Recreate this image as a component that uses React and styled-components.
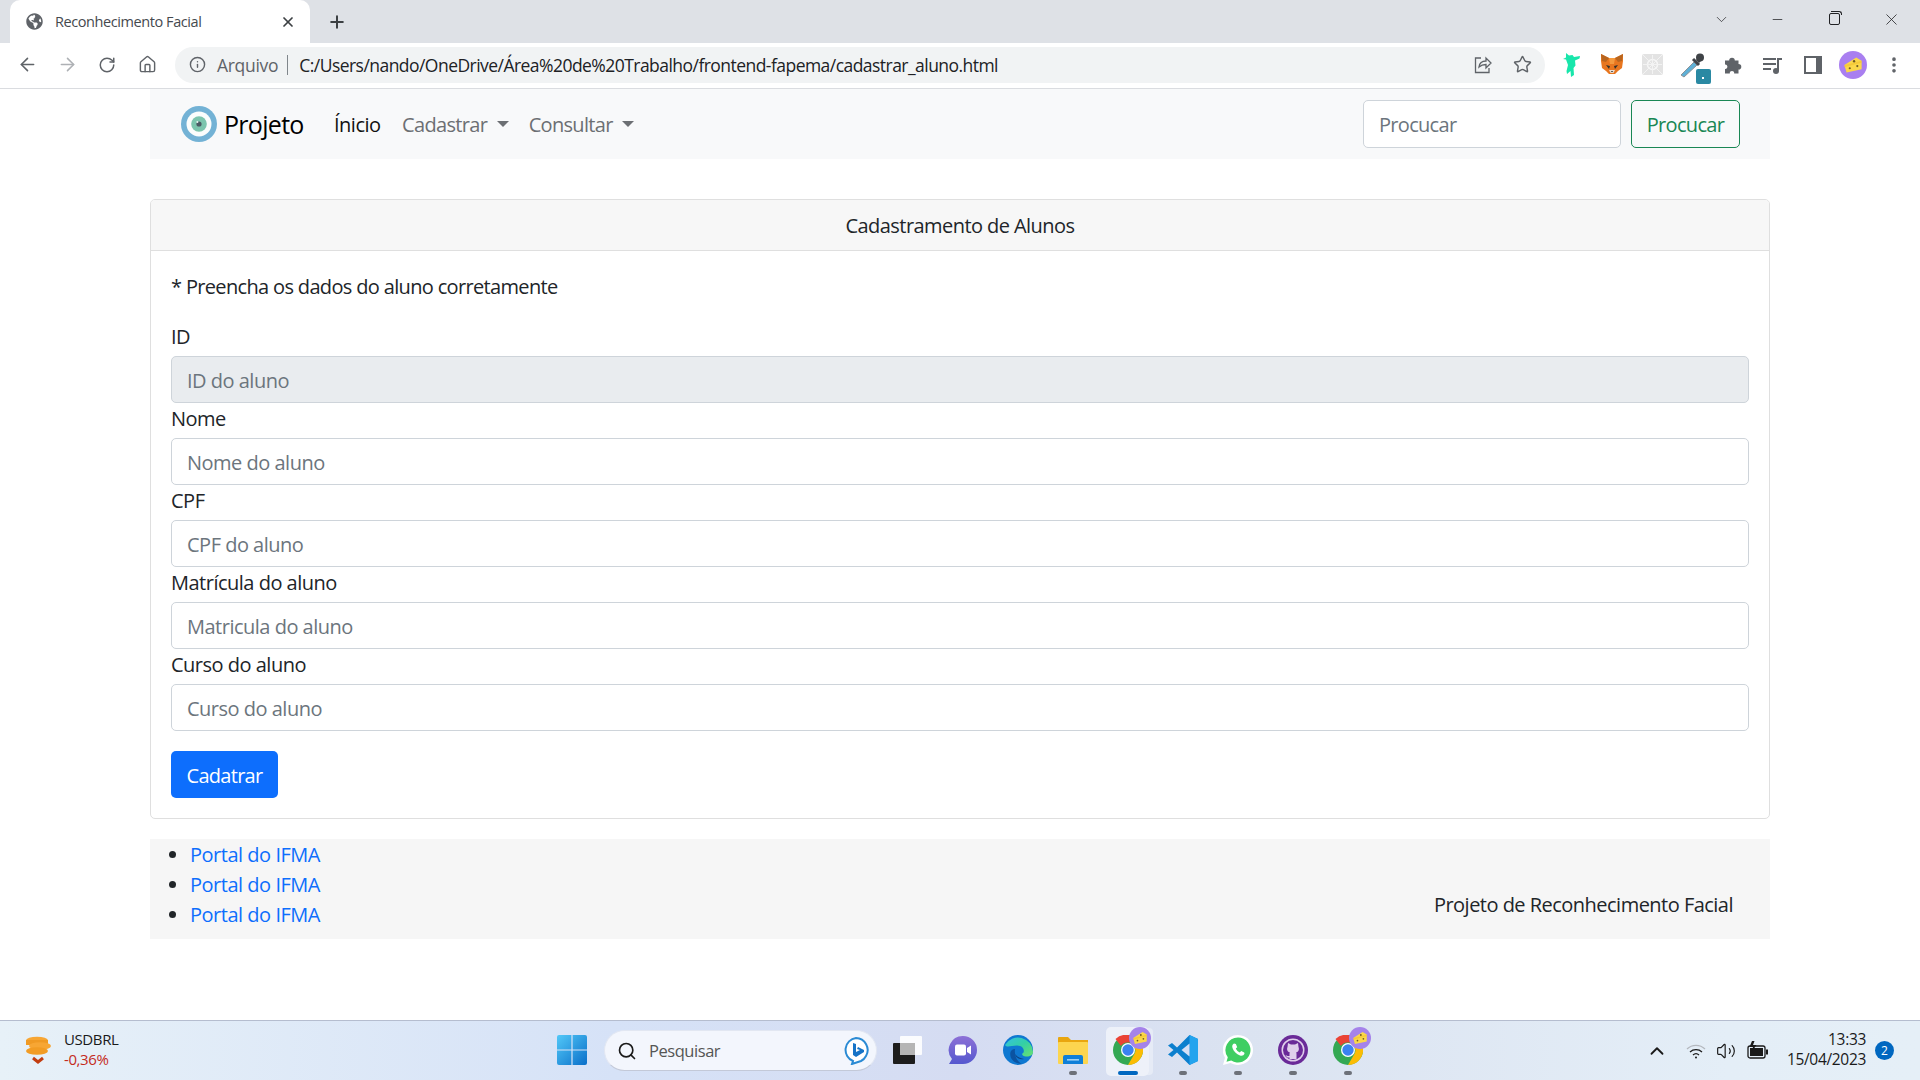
import React from "react";
import styled, { createGlobalStyle } from "styled-components";
import { ArrowLeft, ArrowRight, RotateCw, Home, Info, Star, ChevronDown, ChevronUp, Minus, X, Plus, Search, Volume2, MoreVertical } from "lucide-react";
import { FaGlobeAmericas } from "react-icons/fa";

const UI = `"Open Sans", "Noto Sans", "Liberation Sans", sans-serif`;

const Global = createGlobalStyle`
  html, body { margin: 0; padding: 0; height: 100%; background: #fff; overflow: hidden; }
  * { box-sizing: border-box; }
  body { font-family: ${UI}; color: #212529; }
  input::placeholder { color: #6c757d; opacity: 1; }
`;

const Screen = styled.div`
  width: 1920px; height: 1080px; display: flex; flex-direction: column; overflow: hidden;
`;

/* browser chrome */
const TabStrip = styled.div`
  height: 43px; flex: none; background: #dee1e6; display: flex; align-items: stretch; padding-left: 10px;
`;
const Tab = styled.div`
  width: 300px; background: #fff; border-radius: 10px 10px 0 0; display: flex; align-items: center;
  padding: 0 14px 0 16px; color: #45494e; font-size: 14.5px; letter-spacing: -0.42px;
  svg { flex: none; }
`;
const TabTitle = styled.span` flex: 1; margin-left: 12px; white-space: nowrap; `;
const NewTab = styled.div` width: 54px; display: flex; align-items: center; justify-content: center; color: #3c4043; `;
const WindowControls = styled.div`
  margin-left: auto; display: flex; align-items: center; padding-bottom: 5px; color: #202124;
`;
const WinBtn = styled.div` width: ${p => p.$w || 57}px; display: flex; justify-content: center; `;
const Restore = styled.div`
  width: 11px; height: 12px; border: 1.2px solid #202124; border-radius: 2px; position: relative;
  &::before { content: ""; position: absolute; top: -3px; left: 1px; width: 10px; height: 3px; border: 1.2px solid #202124; border-bottom: 0; border-left: 0; border-radius: 0 3px 0 0; }
`;
const Toolbar = styled.div`
  height: 46px; flex: none; background: #fff; border-bottom: 1px solid #dadce0; display: flex; align-items: center; padding: 0 0 2px 7px;
`;
const NavIcon = styled.div`
  width: 40px; height: 36px; display: flex; align-items: center; justify-content: center; color: ${p => p.$off ? "#aeb1b5" : "#5f6368"}; flex: none;
`;
const Omnibox = styled.div`
  margin-left: 8px; width: 1370px; height: 36px; background: #f1f3f4; border-radius: 18px; display: flex; align-items: center; padding: 0 13px 0 14px; flex: none;
`;
const Chip = styled.span` color: #5f6368; font-size: 17.5px; letter-spacing: -0.3px; margin-left: 11px; `;
const Sep = styled.span` width: 1px; height: 20px; background: #80868b; margin: 0 11px 0 9px; `;
const Url = styled.span` color: #202124; font-size: 17.5px; letter-spacing: -0.54px; white-space: nowrap; flex: 1; `;
const OmniIcons = styled.div` display: flex; align-items: center; gap: 21px; color: #5f6368; `;
const Exts = styled.div` display: flex; align-items: center; margin-left: 7px; `;
const Ext = styled.div` width: 40.2px; height: 36px; display: flex; align-items: center; justify-content: center; color: #5f6368; flex: none; `;

/* page */
const Page = styled.div` flex: 1; min-height: 0; overflow: hidden; padding: 0 150px; display: flex; flex-direction: column; `;
const Nav = styled.nav`
  height: 70px; flex: none; background: #f8f9fa; display: flex; align-items: center; padding: 0 30px 0 31px;
`;
const Brand = styled.div` display: flex; align-items: center; font-size: 25px; letter-spacing: -0.7px; color: #000; width: 153px; gap: 7px; `;
const NavLink = styled.span`
  font-size: 20px; letter-spacing: ${p => p.$active ? -0.5 : -0.68}px; color: ${p => p.$active ? "#111" : "#6c6f73"}; display: flex; align-items: center; margin-right: ${p => p.$active ? 21.5 : 20}px;
  &::after { content: ""; display: ${p => p.$caret ? "block" : "none"}; margin-left: 9.5px; border-top: 6.5px solid currentColor; border-left: 6.5px solid transparent; border-right: 6.5px solid transparent; margin-top: -1px; }
`;
const NavSearch = styled.form` margin-left: auto; display: flex; gap: 10px; `;
const SearchInput = styled.input`
  width: 258px; height: 48px; font: 20px ${UI}; letter-spacing: -0.7px; padding: 0 15px; border: 1px solid #ced4da; border-radius: 5px; background: #fff;
`;
const OutlineBtn = styled.button`
  width: 109px; height: 48px; font: 20px ${UI}; letter-spacing: -0.68px; color: #198754; background: transparent; border: 1px solid #198754; border-radius: 5px; padding: 0;
`;
const Card = styled.section`
  margin-top: 40px; height: 620px; flex: none; border: 1px solid #dfdfdf; border-radius: 5px; display: flex; flex-direction: column; overflow: hidden;
`;
const CardHeader = styled.header`
  height: 51px; flex: none; background: #f7f7f7; border-bottom: 1px solid #dfdfdf; display: flex; align-items: center; justify-content: center; font-size: 20px; letter-spacing: -0.56px; color: #212529;
`;
const CardBody = styled.div` padding: 20px; font-size: 20px; letter-spacing: -0.5px; `;
const Lead = styled.p` margin: 0 0 18px; line-height: 32px; letter-spacing: -0.66px; `;
const Label = styled.label` display: block; line-height: 32px; margin-bottom: 2.5px; `;
const Field = styled.input`
  display: block; width: 100%; height: 47.5px; font: 20px ${UI}; letter-spacing: -0.5px; padding: 2px 15px 0; border: 1px solid #ced4da; border-radius: 5px;
  background: ${p => p.disabled ? "#e9ecef" : "#fff"};
`;
const Primary = styled.button`
  display: block; margin-top: 20px; width: 107px; height: 47px; background: #0d6efd; color: #fff; border: 0; border-radius: 5px; font: 20px ${UI}; letter-spacing: -0.72px; padding: 2px 0 0;
`;
const Footer = styled.footer`
  margin-top: 20px; height: 100px; flex: none; background: #f6f6f6; display: flex; justify-content: space-between; padding-right: 37px;
`;
const Links = styled.ul` margin: 0; padding: 1px 0 0 40px; font-size: 20px; line-height: 30px; letter-spacing: -0.48px; `;
const LinkA = styled.a` color: #0d6efd; text-decoration: none; `;
const FootText = styled.div` font-size: 20px; letter-spacing: -0.52px; color: #212529; align-self: flex-end; line-height: 30px; padding-bottom: 19px; `;

/* taskbar */
const Taskbar = styled.div`
  height: 60px; flex: none; border-top: 1px solid #b5bdcf;
  background: linear-gradient(90deg, #e7f1f8 0%, #d6e2f7 32%, #d5dcf2 50%, #dbe3f1 65%, #e4eef7 90%, #e5eff7 100%);
  display: grid; grid-template-columns: 544px auto 1fr; align-items: center;
`;
const Widget = styled.div` display: flex; align-items: center; padding-left: 25px; gap: 11px; `;
const WidgetText = styled.div` font-size: 15px; line-height: 20px; letter-spacing: -0.4px; color: #1a1a1a; margin-top: -4px; `;
const Red = styled.div` color: #c42b1c; `;
const Center = styled.div` display: flex; align-items: center; `;
const Tile = styled.div`
  width: 55px; height: 52px; display: flex; align-items: center; justify-content: center; position: relative; flex: none;
  svg { position: relative; top: -1px; }
  &::before {
    content: ""; display: ${p => p.$active ? "block" : "none"}; position: absolute; top: 2px; bottom: 1px; left: 6px; right: 6px; border-radius: 5px;
    background: rgba(255,255,255,.55); box-shadow: 5px 0 0 -1px rgba(255,255,255,.35);
  }
  &::after { content: ""; display: ${p => p.$dot ? "block" : "none"}; position: absolute; bottom: 2px; left: 50%; transform: translateX(-50%); height: 4px; border-radius: 2px; width: ${p => p.$active ? 20 : 8}px; background: ${p => p.$active ? "#0067c0" : "#6d7179"}; }
`;
const SearchPill = styled.div`
  width: 273px; height: 41px; margin: 0 3px 0 5px; border-radius: 21px; background: #f3f6fd; border: 1px solid #e2e7f2; border-bottom-color: #c3c9d8; display: flex; align-items: center; padding: 0 7px 0 12px; gap: 12px; font-size: 16.5px; letter-spacing: -0.45px; color: #555;
`;
const PillText = styled.span` flex: 1; `;
const Tray = styled.div` display: flex; align-items: center; justify-content: flex-end; padding-right: 26px; color: #1a1a1a; `;
const TrayIcon = styled.div` width: ${p => p.$w}px; margin-right: ${p => p.$mr || 0}px; display: flex; justify-content: center; flex: none; `;
const Clock = styled.div` text-align: right; font-size: 15.5px; line-height: 20px; letter-spacing: -0.32px; margin-left: 14px; margin-top: -4px; `;
const Badge = styled.div` width: 19px; height: 19px; border-radius: 50%; background: #0067c0; color: #fff; font-size: 12px; display: flex; align-items: center; justify-content: center; margin-left: 9px; `;

/* drawings */
const Eye = () => (
  <svg width="36" height="36" viewBox="0 0 36 36"><circle cx="18" cy="18" r="18" fill="#73b2d5"/><circle cx="18" cy="18" r="12.5" fill="#fbfdfc"/><circle cx="18" cy="18" r="7.8" fill="#7cc5ad"/><circle cx="18" cy="18" r="2.6" fill="#4b5a63"/><circle cx="16.4" cy="16" r="1" fill="#e8f5f0"/></svg>
);
const Ninja = () => (
  <svg width="20" height="24" viewBox="0 0 20 24"><path d="M4 0l3 2.500 3.500-.5 1.500 2 6-1-.5 2.500-4.500 2 .5 5-2 2.500.5 7-3 2-.5-6-3.500 3-.5-3 1.500-6-2-5.500L1 6l3-1.500z" fill="#18e6ab"/></svg>
);
const Fox = () => (
  <svg width="22" height="21" viewBox="0 0 22 21">
    <path d="M0 0l8 4h6l8-4 0 7-1 7-4 3-3 3H8l-3-3-4-3-1-7z" fill="#e8761f"/>
    <path d="M0 0l8 4-3 4-4-1zM22 0l-8 4 3 4 4-1z" fill="#b8651f"/>
    <path d="M5 11l4 1-1 3zM17 11l-4 1 1 3z" fill="#33302c"/>
    <path d="M8 16h6l-1.500 3h-3z" fill="#e9dccf"/>
    <path d="M9.800 17h2.400l-1.200 1.300z" fill="#2f2c28"/>
    <path d="M8 4h6l-1 6H9z" fill="#f59a3e"/>
  </svg>
);
const Grayext = () => (
  <svg width="21" height="21" viewBox="0 0 21 21"><rect width="21" height="21" rx="2" fill="#e3e3e3"/><circle cx="10.500" cy="10.500" r="5" fill="none" stroke="#f6f6f6" strokeWidth="1.500"/><path d="M1 1l19 19M20 1L1 20M10.500 1v19M1 10.500h19" stroke="#f3f3f3"/></svg>
);
const Blue = styled.span`
  position: absolute; right: -5px; bottom: -6px; width: 15px; height: 15px; background: #2a89a3; border-radius: 2px;
  &::after { content: ""; position: absolute; left: 6px; top: 8px; width: 2px; height: 2px; background: #fff; }
`;
const DropperBox = styled.div` position: relative; width: 26px; height: 26px; `;
const Dropper = () => (
  <DropperBox>
    <svg width="26" height="26" viewBox="0 0 26 26"><path d="M1 23l13-13 3 3L4 25z" fill="#5fb0d6" stroke="#8b9298"/><path d="M13 7l6 6" stroke="#3f4347" strokeWidth="3"/><circle cx="20" cy="5.500" r="4" fill="#3f4347"/><path d="M16 8l3 3 4-4-3-3z" fill="#3f4347"/></svg>
    <Blue />
  </DropperBox>
);
const Puzzle = () => (
  <svg width="20" height="20" viewBox="0 0 20 20" fill="#5f6368"><path d="M2 5.500h4.200a2.800 2.800 0 115.600 0H15.500v3.500a2.800 2.800 0 110 5.600V18.500h-4.300c.3-3.200-4.700-3.200-4.400 0H2V14c3.200.3 3.200-4.700 0-4.400z"/></svg>
);
const Queue = () => (
  <svg width="20" height="18" viewBox="0 0 20 18" fill="#5f6368"><rect x="0" y="2" width="13" height="2"/><rect x="0" y="7" width="13" height="2"/><rect x="0" y="12" width="8" height="2"/><circle cx="13" cy="15" r="3"/><rect x="14" y="2" width="2" height="13"/><rect x="14" y="2" width="5" height="2"/></svg>
);
const SidePanel = () => (
  <svg width="18" height="18" viewBox="0 0 18 18"><rect width="18" height="18" fill="#5f6368"/><rect x="2" y="2" width="10" height="14" fill="#fff"/></svg>
);
const Cheese = ({ size = 28, bg = "#a97ff0" }) => (
  <svg width={size} height={size} viewBox="0 0 26 26"><circle cx="13" cy="13" r="13" fill={bg}/><path d="M5 13l11-7 5 3v8L7 20z" fill="#fbd84a"/><path d="M5 13l16-4v2L5 15z" fill="#f2c12e" opacity=".6"/><circle cx="14" cy="9.500" r="1.100" fill="#6f5a20"/><circle cx="17" cy="14" r="1" fill="#6f5a20"/><circle cx="10" cy="16" r="1" fill="#6f5a20"/></svg>
);
const Share = () => (
  <svg width="18" height="18" viewBox="0 0 18 18" fill="none" stroke="#5f6368" strokeWidth="1.300"><path d="M7 2H1.500v14.500H15V12"/><path d="M5 11c.5-4 3.500-6 7-6V2l5 5-5 5V8.500c-3 0-5 .7-7 2.500z"/></svg>
);
const Coins = () => (
  <svg width="28" height="30" viewBox="0 0 28 30"><ellipse cx="12" cy="4.500" rx="11" ry="3.800" fill="#f7a634"/><rect x="1" y="4" width="22" height="5" fill="#f09a24"/><ellipse cx="15" cy="10" rx="11" ry="3.800" fill="#f7a634"/><ellipse cx="12" cy="15" rx="11" ry="3.800" fill="#f29c24"/><path d="M8 22l5 4 5-4" stroke="#c23d10" strokeWidth="3" fill="none"/></svg>
);
const WinLogo = () => (
  <svg width="30" height="30" viewBox="0 0 30 30"><defs><linearGradient id="w" x1="0" y1="0" x2="1" y2="1"><stop offset="0" stopColor="#52c8f8"/><stop offset="1" stopColor="#0a6fc9"/></linearGradient></defs><path fill="url(#w)" d="M0 2a2 2 0 012-2h12.400v14.400H0zM15.600 0H28a2 2 0 012 2v12.400H15.600zM0 15.600h14.400V30H2a2 2 0 01-2-2zM15.600 15.600H30V28a2 2 0 01-2 2H15.600z"/></svg>
);
const Bing = () => (
  <svg width="26" height="28" viewBox="0 0 26 28"><path d="M13 1a12 12 0 0110 18c-1 2-3 4-5 5l-9 3 1-3A12 12 0 0113 1z" fill="#fff" stroke="#2a8ad4" strokeWidth="2"/><path d="M10 6l3 1v8l4-2-3-1 1-2 6 3v2l-8 5-3-2z" fill="#1673c7"/></svg>
);
const TaskView = () => (
  <svg width="30" height="30" viewBox="0 0 30 30"><rect x="0" y="8" width="22" height="21" rx="1" fill="#1d1d1d"/><rect x="7" y="1" width="22" height="19" rx="1" fill="#fff" opacity=".9"/><rect x="7" y="8" width="15" height="12" fill="#b5b5b5"/></svg>
);
const Chat = () => (
  <svg width="30" height="30" viewBox="0 0 30 30"><defs><linearGradient id="c" x1="0" y1="0" x2="0" y2="1"><stop offset="0" stopColor="#8d70d6"/><stop offset="1" stopColor="#5558cf"/></linearGradient></defs><path d="M15 1a14 14 0 110 28H1l3-5A14 14 0 0115 1z" fill="url(#c)"/><rect x="7" y="9.500" width="11" height="11" rx="2" fill="#fff"/><path d="M19 13l4-2.500v9L19 17z" fill="#fff"/></svg>
);
const Edge = () => (
  <svg width="30" height="30" viewBox="0 0 30 30"><defs><linearGradient id="e" x1="0" y1="0" x2="1" y2="1"><stop offset="0" stopColor="#35c1e1"/><stop offset=".5" stopColor="#34d0a4"/><stop offset="1" stopColor="#6be06f"/></linearGradient></defs><circle cx="15" cy="15" r="15" fill="#0f78d1"/><path d="M2 10A15 15 0 0130 17c0 3-3 4.500-6 4.500-4 0-5-1.500-5-3 3 0 3-8-5-8C8 10.500 4 13 2 10z" fill="url(#e)"/><path d="M12 14c-4 0-6 4-4 9 2 4 7 6 11 6-4-2-8-7-7-15z" fill="#0b53a1"/><path d="M12 19c1 4 5 6 9 5-3-.5-7-2-9-5z" fill="#10407e"/></svg>
);
const Folder = () => (
  <svg width="30" height="30" viewBox="0 0 30 30"><path d="M0 3a1 1 0 011-1h9l3 3h17v6H0z" fill="#e9a60f"/><rect y="7" width="30" height="22" rx="1" fill="#fcd54f"/><path d="M5 29v-7a2 2 0 012-2h16a2 2 0 012 2v7z" fill="#0f7fd8"/><rect x="9" y="24" width="12" height="1.600" fill="#9bd0f4"/></svg>
);
const Chrome = () => (
  <svg width="30" height="30" viewBox="0 0 30 30"><circle cx="15" cy="15" r="15" fill="#34a853"/><path d="M15 0a15 15 0 0113 7.500H15A7.500 7.500 0 008 11L2.500 4A15 15 0 0115 0z" fill="#ea4335"/><path d="M28 7.500A15 15 0 0115 30l6.500-11.200A7.500 7.500 0 0020 10z" fill="#fbbc04"/><circle cx="15" cy="15" r="7" fill="#fff"/><circle cx="15" cy="15" r="5.700" fill="#3b82f0"/></svg>
);
const ChromeBadge = styled.span` position: absolute; top: 3px; right: 4px; display: block; height: 22px; `;
const VSCode = () => (
  <svg width="30" height="30" viewBox="0 0 30 30"><path d="M21.500 0L30 4v22l-8.500 4L9 17.500l-5 4.500-4-2.500L5.500 15 0 10.500 4 8l5 4.500z" fill="#0c7fce"/><path d="M21.500 0L30 4v22l-8.500 4z" fill="#24a4ee"/><path d="M21.500 8.500L13.500 15l8 6.500z" fill="#d5dff5"/></svg>
);
const WhatsApp = () => (
  <svg width="30" height="30" viewBox="0 0 30 30"><path d="M15 0a15 15 0 11-7.500 28L0 30l2-7.300A15 15 0 0115 0z" fill="#fff"/><path d="M15 2.500a12.500 12.500 0 11-6.800 23L3.500 26.700l1.300-4.500A12.500 12.500 0 0115 2.500z" fill="#3fce62"/><path d="M11 8.500c-1.500.8-2.200 2.500-1.500 4.500 1.200 3.500 4 6.300 7.500 7.500 2 .6 3.800 0 4.500-1.700l-.3-1.300-3-1.500-1.400 1.600c-1.700-.7-3.200-2.200-4-4l1.400-1.400-1.300-3.200z" fill="#fff"/></svg>
);
const GithubDesk = () => (
  <svg width="30" height="30" viewBox="0 0 30 30"><circle cx="15" cy="15" r="15" fill="#6a2a98"/><circle cx="15" cy="15" r="11.500" fill="#dfcfeb"/><circle cx="15" cy="15" r="10" fill="#6a2a98"/><path d="M10 8l3 1.500h4L20 8l.5 4c1 2.500 0 5-2.500 5.500.5.500.5 1 .5 2V24h-7v-1.500c-2 .3-3-.5-4-2.500 1 .5 2 1.200 4 1v-1.500c0-1 0-1.500.5-2-2.500-.5-3.500-3-2.500-5.500z" fill="#dfcfeb"/></svg>
);
const Wifi = () => (
  <svg width="20" height="16" viewBox="0 0 20 16" fill="none" stroke="#1a1a1a" strokeWidth="1.300"><path d="M1 6a13 13 0 0118 0" stroke="#b4b8bf"/><path d="M4 9a9 9 0 0112 0"/><path d="M7 12a4.500 4.500 0 016 0"/><circle cx="10" cy="14.500" r="1" fill="#1a1a1a" stroke="none"/></svg>
);
const Battery = () => (
  <svg width="22" height="20" viewBox="0 0 22 20"><rect x="1" y="5" width="17" height="12" rx="2" fill="none" stroke="#1a1a1a" strokeWidth="1.300"/><rect x="3" y="7" width="13" height="8" fill="#1a1a1a"/><rect x="19" y="8.500" width="2" height="5" fill="#1a1a1a"/><path d="M5 0L2.500 6H6l-1.500 5 5-7H6l1.500-4z" fill="#1a1a1a"/></svg>
);

const fields = [
  ["ID", "ID do aluno", true],
  ["Nome", "Nome do aluno"],
  ["CPF", "CPF do aluno"],
  ["Matrícula do aluno", "Matricula do aluno"],
  ["Curso do aluno", "Curso do aluno"],
];

export default function App() {
  return (
    <Screen>
      <Global />
      <TabStrip>
        <Tab>
          <FaGlobeAmericas size={17} color="#5f6368" />
          <TabTitle>Reconhecimento Facial</TabTitle>
          <X size={16} strokeWidth={2.6} color="#3c4043" />
        </Tab>
        <NewTab><Plus size={20} strokeWidth={2.4} /></NewTab>
        <WindowControls>
          <WinBtn $w={56}><ChevronDown size={17} strokeWidth={1} /></WinBtn>
          <WinBtn><Minus size={15} strokeWidth={1.2} /></WinBtn>
          <WinBtn><Restore /></WinBtn>
          <WinBtn><X size={19} strokeWidth={1} /></WinBtn>
        </WindowControls>
      </TabStrip>
      <Toolbar>
        <NavIcon><ArrowLeft size={21} strokeWidth={1.8} /></NavIcon>
        <NavIcon $off><ArrowRight size={21} strokeWidth={1.8} /></NavIcon>
        <NavIcon><RotateCw size={18} strokeWidth={2} /></NavIcon>
        <NavIcon><Home size={19} strokeWidth={1.8} /></NavIcon>
        <Omnibox>
          <Info size={17} color="#5f6368" strokeWidth={2} />
          <Chip>Arquivo</Chip>
          <Sep />
          <Url>C:/Users/nando/OneDrive/Área%20de%20Trabalho/frontend-fapema/cadastrar_aluno.html</Url>
          <OmniIcons>
            <Share />
            <Star size={19} strokeWidth={1.8} />
          </OmniIcons>
        </Omnibox>
        <Exts>
          <Ext><Ninja /></Ext>
          <Ext><Fox /></Ext>
          <Ext><Grayext /></Ext>
          <Ext><Dropper /></Ext>
          <Ext><Puzzle /></Ext>
          <Ext><Queue /></Ext>
          <Ext><SidePanel /></Ext>
          <Ext><Cheese /></Ext>
          <Ext><MoreVertical size={20} strokeWidth={2.4} /></Ext>
        </Exts>
      </Toolbar>
      <Page>
        <Nav>
          <Brand><Eye /><span>Projeto</span></Brand>
          <NavLink $active>Ínicio</NavLink>
          <NavLink $caret>Cadastrar</NavLink>
          <NavLink $caret>Consultar</NavLink>
          <NavSearch>
            <SearchInput placeholder="Procucar" />
            <OutlineBtn type="button">Procucar</OutlineBtn>
          </NavSearch>
        </Nav>
        <Card>
          <CardHeader>Cadastramento de Alunos</CardHeader>
          <CardBody>
            <Lead>* Preencha os dados do aluno corretamente</Lead>
            {fields.map(([l, ph, dis]) => (
              <div key={l}>
                <Label>{l}</Label>
                <Field placeholder={ph} disabled={dis} />
              </div>
            ))}
            <Primary type="button">Cadatrar</Primary>
          </CardBody>
        </Card>
        <Footer>
          <Links>
            <li><LinkA href="#">Portal do IFMA</LinkA></li>
            <li><LinkA href="#">Portal do IFMA</LinkA></li>
            <li><LinkA href="#">Portal do IFMA</LinkA></li>
          </Links>
          <FootText>Projeto de Reconhecimento Facial</FootText>
        </Footer>
      </Page>
      <Taskbar>
        <Widget>
          <Coins />
          <WidgetText>USDBRL<Red>-0,36%</Red></WidgetText>
        </Widget>
        <Center>
          <Tile><WinLogo /></Tile>
          <SearchPill>
            <Search size={20} color="#1a1a1a" strokeWidth={2} />
            <PillText>Pesquisar</PillText>
            <Bing />
          </SearchPill>
          <Tile><TaskView /></Tile>
          <Tile><Chat /></Tile>
          <Tile><Edge /></Tile>
          <Tile $dot><Folder /></Tile>
          <Tile $dot $active><Chrome /><ChromeBadge><Cheese size={22} bg="#a583ea" /></ChromeBadge></Tile>
          <Tile $dot><VSCode /></Tile>
          <Tile $dot><WhatsApp /></Tile>
          <Tile $dot><GithubDesk /></Tile>
          <Tile $dot><Chrome /><ChromeBadge><Cheese size={22} bg="#a583ea" /></ChromeBadge></Tile>
        </Center>
        <Tray>
          <TrayIcon $w={30} $mr={9}><ChevronUp size={22} strokeWidth={2} /></TrayIcon>
          <TrayIcon $w={30}><Wifi /></TrayIcon>
          <TrayIcon $w={30} $mr={2}><Volume2 size={20} strokeWidth={1.4} /></TrayIcon>
          <TrayIcon $w={30}><Battery /></TrayIcon>
          <Clock>13:33<br />15/04/2023</Clock>
          <Badge>2</Badge>
        </Tray>
      </Taskbar>
    </Screen>
  );
}
